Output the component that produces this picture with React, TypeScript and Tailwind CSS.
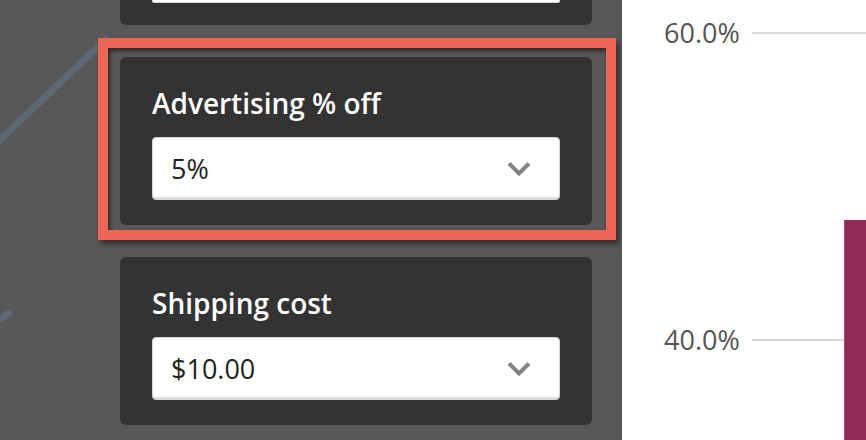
const font = { fontFamily: '"Open Sans", "Noto Sans", sans-serif' };

interface SelectCardProps {
    label: string;
    value: string;
}

function Chevron() {
    return (
        <svg width="24" height="16" viewBox="0 0 24 16" fill="none">
            <path d="M2 2.5l10 10 10-10" stroke="#838383" strokeWidth="4" />
        </svg>
    );
}

function SelectCard({ label, value }: SelectCardProps) {
    return (
        <div className="h-[168px] rounded-[6px] bg-[#333333] px-8 pt-[28px]">
            <div className="text-[28px] font-semibold leading-[36px] text-white">{label}</div>
            <div className="mt-[16px] flex h-[63px] items-center justify-between rounded-[4px] border border-[#d6d6d6] bg-white pl-[18px] pr-[28px] shadow-[inset_0_-2px_0_#dcdcdc]">
                <span className="text-[27px] leading-none text-[#222222]">{value}</span>
                <Chevron />
            </div>
        </div>
    );
}

// the card above is scrolled out of view, only its select's bottom edge shows
function CutCard() {
    return (
        <div className="flex h-[25px] flex-col rounded-b-[6px] bg-[#333333] px-8">
            <div className="h-[2px] rounded-b-[4px] bg-white shadow-[0_1px_0_#d6d6d6]" />
        </div>
    );
}

export default function App() {
    return (
        <div className="flex h-[440px] w-[866px] overflow-hidden bg-white" style={font}>
            {/* Settings column */}
            <div className="relative w-[622px] shrink-0 overflow-hidden bg-[#575757]">
                <svg className="absolute left-0 top-0" width="622" height="440">
                    <line x1="-20" y1="159" x2="106" y2="39" stroke="#5c6874" strokeWidth="7" strokeLinecap="round" />
                    <line x1="-10" y1="326" x2="9" y2="313" stroke="#5c6874" strokeWidth="7" strokeLinecap="round" />
                </svg>
                <div className="relative ml-[120px] flex w-[472px] flex-col gap-8">
                    <CutCard />
                    <SelectCard label="Advertising % off" value="5%" />
                    <SelectCard label="Shipping cost" value="$10.00" />
                </div>
                {/* Highlight annotation */}
                <div className="absolute left-[98px] top-[38px] h-[202px] w-[518px] border-[10px] border-[#ec6453] shadow-[3px_4px_5px_rgba(0,0,0,0.45),inset_2px_3px_4px_rgba(0,0,0,0.55)]" />
            </div>

            {/* Chart */}
            <div className="relative flex-1">
                <div className="absolute left-[42px] top-[17px] flex w-[202px] items-center gap-3">
                    <span className="text-[27px] leading-[32px] text-[#545454]">60.0%</span>
                    <div className="h-[2px] flex-1 bg-[#dadada]" />
                </div>
                <div className="absolute left-[42px] top-[324px] flex w-[202px] items-center gap-3">
                    <span className="text-[27px] leading-[32px] text-[#545454]">40.0%</span>
                    <div className="h-[2px] flex-1 bg-[#dadada]" />
                </div>
                <div className="absolute left-[222px] top-[220px] h-[220px] w-[30px] border-l border-[#b04a76] bg-[#922a57]" />
            </div>
        </div>
    );
}
